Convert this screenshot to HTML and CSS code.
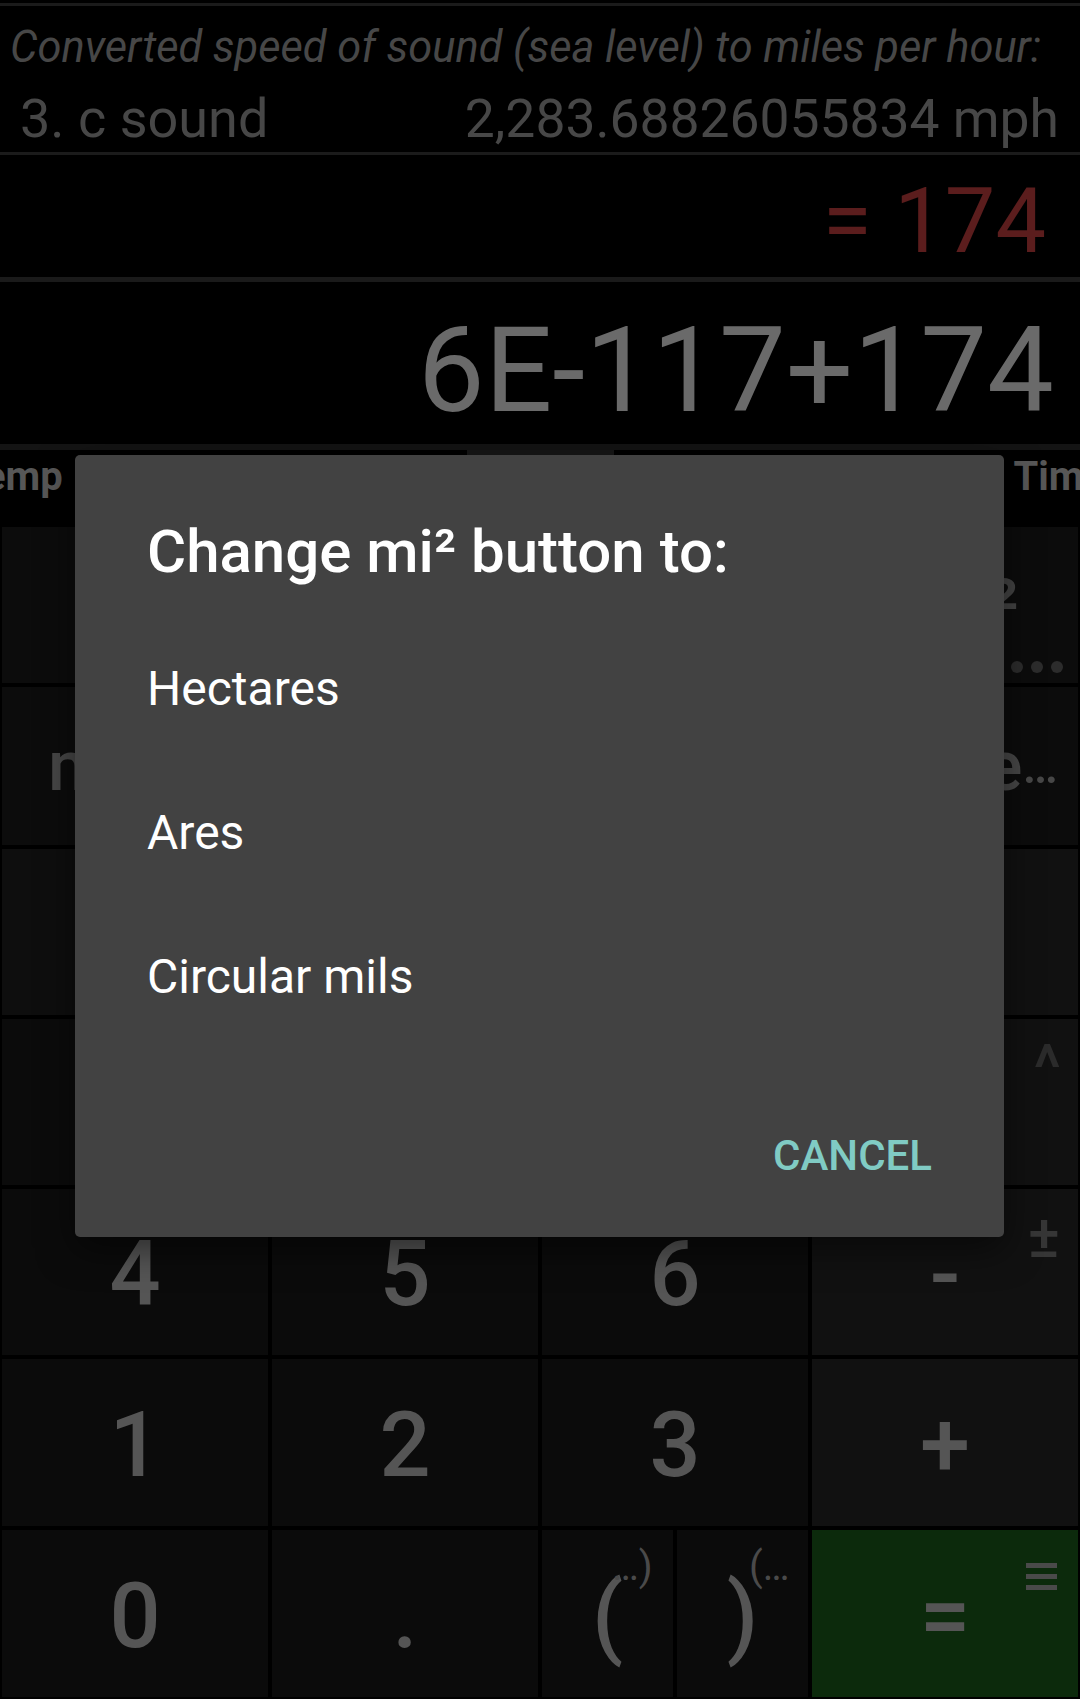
FILE: index.html
```html
<!DOCTYPE html>
<html lang="en">
<head>
<meta charset="utf-8">
<title>Calculator</title>
<link rel="stylesheet" href="styles.css">
</head>
<body>
<div class="screen">
  <div class="rule rule-top"></div>
  <div class="conv">
    <div class="conv-title">Converted speed of sound (sea level) to miles per hour:</div>
    <div class="conv-row"><span>3. c sound</span><span class="conv-value">2,283.68826055834 mph</span></div>
  </div>
  <div class="rule rule-mid"></div>
  <div class="result">= 174</div>
  <div class="rule rule-thick"></div>
  <div class="expr">6E-117+174</div>
  <div class="rule rule-tabs"></div>
  <div class="tabs">
    <span class="tab tab-first">Temp</span>
    <span class="tab tab-active">Area</span>
    <span class="tab tab-last">Time</span>
  </div>
  <div class="keypad">
    <div class="key key-unit">in²</div>
    <div class="key key-unit">ft²</div>
    <div class="key key-unit">yd²</div>
    <div class="key key-unit key-shift">mi²
      <svg class="corner-dots" width="52" height="12" viewBox="0 0 52 12"><circle cx="6" cy="6" r="6"/><circle cx="26" cy="6" r="6"/><circle cx="46" cy="6" r="6"/></svg>
    </div>

    <div class="key key-unit2">mach</div>
    <div class="key key-unit2">cm²</div>
    <div class="key key-unit2">m²</div>
    <div class="key key-unit2 key-shift">More<span class="ellipsis">…</span></div>

    <div class="key key-fn">C</div>
    <div class="key key-fn">⌫</div>
    <div class="key key-fn">%</div>
    <div class="key key-op">×</div>

    <div class="key">7</div>
    <div class="key">8</div>
    <div class="key">9</div>
    <div class="key key-op">÷<span class="corner corner-caret">^</span></div>

    <div class="key">4</div>
    <div class="key">5</div>
    <div class="key">6</div>
    <div class="key key-op">-<span class="corner corner-pm">±</span></div>

    <div class="key">1</div>
    <div class="key">2</div>
    <div class="key">3</div>
    <div class="key key-op">+</div>

    <div class="key">0</div>
    <div class="key">.</div>
    <div class="key-split">
      <div class="key">(<span class="paren-sup sup-open">…)</span></div>
      <div class="key">)<span class="paren-sup sup-close">(…</span></div>
    </div>
    <div class="key key-eq">=
      <svg class="corner-menu" width="31" height="27" viewBox="0 0 31 27"><rect x="0" y="0" width="31" height="5"/><rect x="0" y="11" width="31" height="5"/><rect x="0" y="22" width="31" height="5"/></svg>
    </div>
  </div>
</div>

<div class="dialog">
  <div class="dialog-title">Change mi² button to:</div>
  <ul class="dialog-list">
    <li>Hectares</li>
    <li>Ares</li>
    <li>Circular mils</li>
  </ul>
  <div class="dialog-actions"><span class="btn">CANCEL</span></div>
</div>
</body>
</html>
```
FILE: styles.css
```css
* {
  box-sizing: border-box;
  margin: 0;
  padding: 0;
}

html,
body {
  background: #000;
}

body {
  width: 1080px;
  height: 1699px;
  overflow: hidden;
  position: relative;
  font-family: Roboto, "Noto Sans", "Liberation Sans", sans-serif;
}

.screen {
  display: flex;
  flex-direction: column;
  height: 1699px;
}

.rule {
  flex: none;
  background: #1b1b1b;
}

.rule-top {
  margin-top: 3px;
  height: 3px;
}

.rule-mid {
  margin-top: 2px;
  height: 3px;
}

.rule-thick {
  height: 5px;
  background: #1a1a1a;
}

.rule-tabs {
  height: 6px;
  background: #141414;
}

/* conversion info */
.conv {
  padding: 17px 21px 0 10px;
  color: #474747;
}

.conv-title {
  font-size: 43.4px;
  font-style: italic;
  line-height: 50px;
  white-space: nowrap;
}

.conv-row {
  margin-top: 14px;
  padding-left: 10px;
  display: flex;
  justify-content: space-between;
  font-size: 54px;
  line-height: 63px;
  white-space: nowrap;
}

.conv-value {
  font-size: 53.4px;
}

.result {
  flex: none;
  height: 122px;
  padding: 14px 34px 0 0;
  text-align: right;
  font-size: 90px;
  line-height: 105px;
  color: #5b1d1d;
}

.expr {
  flex: none;
  height: 162px;
  padding: 19px 26px 0 0;
  text-align: right;
  font-size: 119px;
  line-height: 140px;
  color: #6a6a6a;
}

/* tabs */
.tabs {
  flex: none;
  height: 77px;
  display: grid;
  grid-template-columns: 1fr 147px 1fr;
  overflow: hidden;
}

.tab {
  font-size: 40px;
  font-weight: 700;
  line-height: 47px;
  padding-top: 3px;
  color: #575757;
  white-space: nowrap;
}

.tab-first {
  justify-self: start;
  margin-left: -39px;
}

.tab-active {
  padding-top: 0;
  border-top: 5px solid #171717;
  text-align: center;
}

.tab-last {
  justify-self: end;
  margin-right: -25px;
}

/* keypad */
.keypad {
  flex: 1;
  display: grid;
  grid-template-columns: repeat(4, 1fr);
  grid-template-rows: 156px 158px 166px 166px 166px 167px 167px;
  gap: 4px;
  padding: 0 2px 2px;
}

.key {
  position: relative;
  display: flex;
  align-items: center;
  justify-content: center;
  padding-top: 6px;
  background: #0b0b0b;
  color: #555;
  font-size: 90px;
  font-weight: 500;
  line-height: 1;
  white-space: nowrap;
}

.key-unit {
  font-size: 80px;
  color: #444;
  background: #0c0c0c;
}

.key-unit2 {
  font-size: 70px;
  color: #474747;
  background: #0c0c0c;
  padding-top: 0;
}

.key-shift {
  padding-left: 28px;
}

.ellipsis {
  font-size: 50px;
}

.key-fn {
  background: #0e0e0e;
}

.key-op {
  background: #111;
}

.key-eq {
  background: #0c2a0c;
}

.key-split {
  display: grid;
  grid-template-columns: 1fr 1fr;
  gap: 4px;
}

.corner {
  position: absolute;
  font-weight: 500;
}

.corner-caret {
  top: 18px;
  right: 17px;
  font-size: 64px;
  line-height: 64px;
  color: #2b2b2b;
}

.corner-pm {
  top: 18px;
  right: 18px;
  font-size: 60px;
  line-height: 60px;
  color: #363636;
}

.corner-dots {
  position: absolute;
  right: 15px;
  bottom: 10px;
  fill: #2c2c2c;
}

.corner-menu {
  position: absolute;
  right: 21px;
  top: 33px;
  fill: #4a4a4a;
}

.paren-sup {
  position: absolute;
  top: 17px;
  font-size: 40px;
  line-height: 40px;
  font-weight: 400;
  color: #4a4a4a;
}

.sup-open {
  left: 70px;
}

.sup-close {
  left: 72px;
}

/* dialog */
.dialog {
  position: absolute;
  left: 75px;
  top: 455px;
  width: 929px;
  height: 782px;
  background: #424242;
  border-radius: 5px;
  box-shadow: 0 12px 36px rgba(0, 0, 0, 0.5);
  color: #fff;
}

.dialog-title {
  padding: 62px 72px 0;
  font-size: 60px;
  font-weight: 500;
  line-height: 70px;
}

.dialog-list {
  list-style: none;
  margin-top: 30px;
}

.dialog-list li {
  height: 144px;
  padding-left: 72px;
  font-size: 48px;
  line-height: 144px;
}

.dialog-actions {
  margin-top: 82px;
  padding-right: 72px;
  display: flex;
  justify-content: flex-end;
}

.btn {
  font-size: 42px;
  font-weight: 500;
  line-height: 49px;
  color: #80cbc4;
}
```
